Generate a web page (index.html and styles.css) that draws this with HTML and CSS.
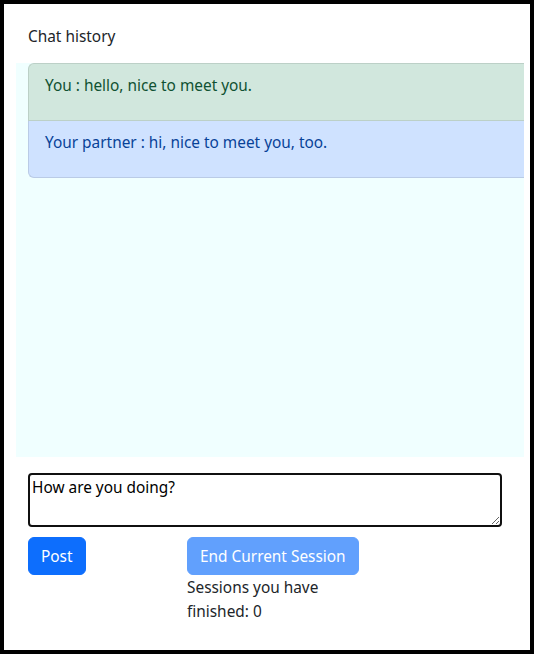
FILE: index.html
```html
<!DOCTYPE html>
<html lang="en">
<head>
<meta charset="utf-8">
<title>Chat</title>
<link rel="stylesheet" href="styles.css">
</head>
<body>
<div class="frame">
  <h2 class="title">Chat history</h2>
  <div class="history">
    <ul class="list">
      <li class="item item-success"><p>You : hello, nice to meet you.</p></li>
      <li class="item item-primary"><p>Your partner : hi, nice to meet you, too.</p></li>
    </ul>
  </div>
  <div class="composer">
    <textarea class="input">How are you doing?</textarea>
    <div class="actions">
      <div class="col"><button class="btn">Post</button></div>
      <div class="col">
        <button class="btn btn-disabled" disabled>End Current Session</button>
        <p class="count">Sessions you have finished: 0</p>
      </div>
    </div>
  </div>
</div>
</body>
</html>
```

FILE: styles.css
```css
* { box-sizing: border-box; }
html, body { margin: 0; padding: 0; }
body {
  font-family: "Noto Sans", "Open Sans", sans-serif;
  font-size: 15.4px;
  line-height: 24px;
  color: #212529;
  background: #fff;
}
.frame {
  width: 534px;
  height: 654px;
  border: 4px solid #000;
  padding: 21px 6px 0 12px;
}
.title {
  margin: 0 0 14px 12px;
  font-size: 15.4px;
  font-weight: 400;
  line-height: 24px;
}
.history {
  background: #f0ffff;
  height: 394px;
  padding-left: 12px;
}
.list {
  list-style: none;
  margin: 0;
  padding: 0;
}
.item {
  padding: 10px 16px 6px;
  border: 1px solid rgba(0,0,0,0.125);
  border-right: 0;
}
.item + .item { border-top: 0; }
.item:first-child { border-radius: 6px 0 0 0; }
.item:last-child { border-radius: 0 0 0 6px; }
.item p { margin: 0 0 16px; }
.item-success { background: #d1e7dd; color: #0f5132; border-color: #bcd0c7; }
.item-primary { background: #cfe2ff; color: #084298; border-color: #bacbe6; }
.composer {
  padding: 16px 0 0 12px;
}
.input {
  display: block;
  width: 474px;
  height: 54px;
  border: 2px solid #101010;
  border-radius: 4px;
  padding: 2px 2px 0;
  font-family: inherit;
  font-size: 15.4px;
  line-height: 22px;
  color: #000;
  resize: vertical;
  outline: none;
}
.actions {
  display: grid;
  grid-template-columns: 159px 169px;
  margin-top: 10px;
}
.btn {
  font-family: inherit;
  font-size: 15.4px;
  line-height: 24px;
  padding: 7px 12px 5px;
  border: 1px solid #0d6efd;
  border-radius: 6px;
  background: #0d6efd;
  color: #fff;
  white-space: nowrap;
}
.btn-disabled { opacity: 0.65; }
.count {
  margin: 0;
  padding-top: 1px;
  width: 150px;
}
```
